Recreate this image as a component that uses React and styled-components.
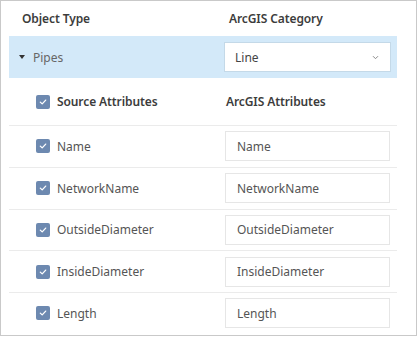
import React from "react";
import styled, { createGlobalStyle } from "styled-components";

const GlobalStyle = createGlobalStyle`
  html, body {
    margin: 0;
    padding: 0;
    background: #ffffff;
  }
  body {
    font-family: "Noto Sans", "Open Sans", sans-serif;
  }
`;

const attributes = [
  "Name",
  "NetworkName",
  "OutsideDiameter",
  "InsideDiameter",
  "Length",
];

const Check = () => (
  <CheckBox>
    <svg width="10" height="10" viewBox="0 0 10 10">
      <path
        d="M2.3 5.1 L4.2 6.9 L7.7 3.1"
        fill="none"
        stroke="#ffffff"
        strokeWidth="1.3"
        strokeLinecap="round"
        strokeLinejoin="round"
      />
    </svg>
  </CheckBox>
);

const App = () => {
  return (
    <>
      <GlobalStyle />
      <Panel>
        <HeaderRow>
          <HeadLabel $indent={13}>Object Type</HeadLabel>
          <HeadLabel $indent={5}>ArcGIS Category</HeadLabel>
        </HeaderRow>

        <GroupRow>
          <GroupName>
            <Caret />
            Pipes
          </GroupName>
          <Select>
            <span>Line</span>
            <svg width="7" height="5" viewBox="0 0 7 5">
              <path
                d="M1 1.2 L3.5 3.7 L6 1.2"
                fill="none"
                stroke="#8a8a8a"
                strokeWidth="1"
              />
            </svg>
          </Select>
        </GroupRow>

        <AttrHeader>
          <CheckCell>
            <Check />
            <HeadLabel>Source Attributes</HeadLabel>
          </CheckCell>
          <HeadLabel $indent={2}>ArcGIS Attributes</HeadLabel>
        </AttrHeader>

        {attributes.map((name) => (
          <AttrRow key={name}>
            <CheckCell>
              <Check />
              <AttrName>{name}</AttrName>
            </CheckCell>
            <Field>{name}</Field>
          </AttrRow>
        ))}
      </Panel>
    </>
  );
};

export default App;

const Panel = styled.div`
  box-sizing: border-box;
  width: 417px;
  height: 336px;
  border: 1px solid #c9c9c9;
  padding: 0 19px 0 8px;
  overflow: hidden;
`;

const Row = styled.div`
  display: grid;
  grid-template-columns: 215px 1fr;
  align-items: center;
`;

const HeaderRow = styled(Row)`
  height: 35px;
`;

const HeadLabel = styled.div`
  padding-left: ${(p) => p.$indent || 0}px;
  font-size: 12px;
  font-weight: 600;
  letter-spacing: -0.1px;
  color: #3c3c3c;
  white-space: nowrap;
`;

const GroupRow = styled(Row)`
  height: 42px;
  background: #d3e9f9;
`;

const GroupName = styled.div`
  display: flex;
  align-items: center;
  gap: 8px;
  padding-left: 10px;
  font-size: 12px;
  color: #666;
`;

const Caret = styled.span`
  width: 0;
  height: 0;
  border-left: 3.5px solid transparent;
  border-right: 3.5px solid transparent;
  border-top: 4px solid #333;
`;

const Select = styled.div`
  box-sizing: border-box;
  width: 167px;
  height: 30px;
  display: flex;
  align-items: center;
  justify-content: space-between;
  padding: 0 11px 0 10px;
  background: #fff;
  border: 1px solid #c4d9e8;
  font-size: 12px;
  color: #444;
`;

const AttrHeader = styled(Row)`
  height: 47px;
`;

const CheckCell = styled.div`
  display: flex;
  align-items: center;
  gap: 7px;
  padding-left: 27px;
`;

const CheckBox = styled.span`
  display: flex;
  align-items: center;
  justify-content: center;
  width: 14px;
  height: 14px;
  border-radius: 2px;
  background: #6d89b0;
`;

const AttrRow = styled(Row)`
  height: 40.75px;
  border-top: 1px solid #ebebeb;
`;

const AttrName = styled.span`
  font-size: 12px;
  color: #555;
`;

const Field = styled.div`
  box-sizing: border-box;
  width: 165px;
  height: 30px;
  margin-left: 1px;
  display: flex;
  align-items: center;
  padding-left: 11px;
  border: 1px solid #e6e6e6;
  font-size: 12px;
  color: #555;
`;
